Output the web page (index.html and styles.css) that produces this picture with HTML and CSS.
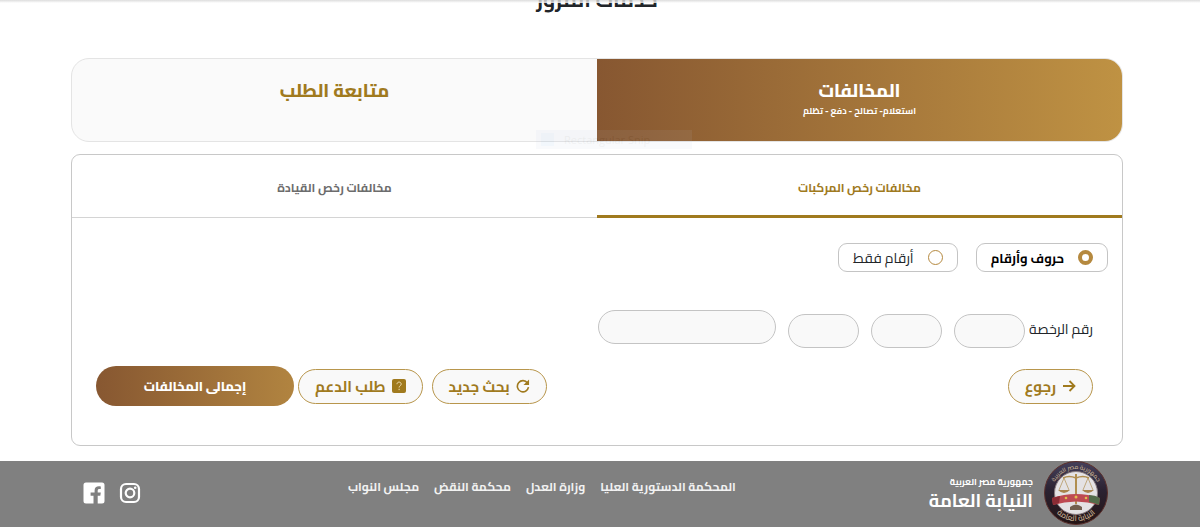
FILE: index.html
```html
<!DOCTYPE html>
<html lang="ar" dir="rtl">
<head>
    <meta charset="UTF-8">
    <meta name="viewport" content="width=device-width, initial-scale=1.0">
    <title>خدمات المرور</title>
    <link rel="stylesheet" href="styles.css">
</head>
<body>
    <div class="top-shadow"></div>

    <main class="page">
        <h1 class="page-title">خدمات المرور</h1>

        <nav class="services">
            <a href="#violations" class="service active">
                <span class="service-name">المخالفات</span>
                <span class="service-note">استعلام- تصالح - دفع - تظلم</span>
            </a>
            <a href="#follow" class="service">
                <span class="service-name">متابعة الطلب</span>
            </a>
            <div class="snip-hint" dir="ltr"><span class="snip-icon"></span>Rectangular Snip</div>
        </nav>

        <section class="panel" id="violations">
            <div class="tabs">
                <button type="button" class="tab active">مخالفات رخص المركبات</button>
                <button type="button" class="tab">مخالفات رخص القيادة</button>
            </div>

            <form class="search">
                <div class="plate-types">
                    <label class="plate-type"><input type="radio" name="plate" checked><span>حروف وأرقام</span></label>
                    <label class="plate-type"><input type="radio" name="plate"><span>أرقام فقط</span></label>
                </div>

                <div class="plate-row">
                    <label class="plate-label" for="letter1">رقم الرخصة</label>
                    <div class="plate-fields">
                        <input type="text" class="field" id="letter1" maxlength="1">
                        <input type="text" class="field" id="letter2" aria-label="الحرف الثاني" maxlength="1">
                        <input type="text" class="field" id="letter3" aria-label="الحرف الثالث" maxlength="1">
                        <input type="text" class="field field-wide" id="numbers" aria-label="الأرقام">
                    </div>
                </div>

                <div class="actions">
                    <button type="button" class="btn btn-back">
                        <svg width="14" height="14" viewBox="0 0 14 14"><path d="M1 7h11M7.500 2l5 5-5 5" fill="none" stroke="currentColor" stroke-width="1.800"/></svg>
                        رجوع
                    </button>
                    <button type="reset" class="btn">
                        <svg width="14" height="14" viewBox="0 0 15 15"><path d="M12.300 4.200A6 6 0 1 0 13.400 8.800" fill="none" stroke="currentColor" stroke-width="1.700"/><path d="M14 .5v6H8z" fill="currentColor"/></svg>
                        بحث جديد
                    </button>
                    <div class="action-group">
                        <button type="button" class="btn">
                            <svg width="14" height="14" viewBox="0 0 14 14"><rect width="14" height="14" rx="2" fill="currentColor"/><path d="M5 5.200c0-2.800 4.200-2.800 4.200 0C9.200 6.700 7.100 6.700 7.100 8.500M7.100 9.800v1.300" fill="none" stroke="#f0dfb4" stroke-width="1"/></svg>
                            طلب الدعم
                        </button>
                        <button type="submit" class="btn-total">إجمالى المخالفات</button>
                    </div>
                </div>
            </form>
        </section>
    </main>

    <footer class="footer">
        <div class="brand">
            <svg class="seal" width="64" height="64" viewBox="0 0 64 64">
                <defs>
                    <path id="arc-top" d="M8 32a24 24 0 0 1 48 0"/>
                    <path id="arc-bottom" d="M4 32a28 28 0 0 0 56 0"/>
                    <linearGradient id="ring" x1="0" y1="0" x2="0" y2="1">
                        <stop offset="0" stop-color="#45405a"/>
                        <stop offset=".45" stop-color="#2b2232"/>
                        <stop offset="1" stop-color="#241414"/>
                    </linearGradient>
                </defs>
                <circle cx="32" cy="32" r="31.500" fill="url(#ring)" stroke="#5c302c"/>
                <circle cx="32" cy="32" r="21.500" fill="#e4e2e4" stroke="#8a7c80"/>
                <g stroke="#b08e50" fill="none">
                    <path d="M32 13v30" stroke-width="2"/>
                    <path d="M19 17q6-3 13 0 7-3 13 0" stroke-width="1.500"/>
                    <path d="M20 17l-5 12M20 17l5 12M44 17l-5 12M44 17l5 12" stroke-width=".7"/>
                </g>
                <path d="M14 29h12q-6 6-12 0zM38 29h12q-6 6-12 0z" fill="#a8834d"/>
                <path d="M26 46q6-5 12 0v3H26z" fill="#725f4f"/>
                <path d="M8 37q24-8 48 0l-1 7q-23-7-46 0z" fill="#bd4a52"/>
                <path d="M45 34q6 0 11 3l-1 7q-4-2-10-3z" fill="#536c4a"/>
                <path d="M8 37l8-2-1 7-6 2z" fill="#8b2c35"/>
                <g fill="#e3bd4e"><circle cx="22" cy="37" r="1.300"/><circle cx="32" cy="36" r="1.500"/><circle cx="42" cy="37" r="1.300"/></g>
                <text class="seal-text"><textPath href="#arc-top" startOffset="50%">جمهورية مصر العربية</textPath></text>
                <text class="seal-text seal-text-large"><textPath href="#arc-bottom" startOffset="50%">النيابة العامة</textPath></text>
            </svg>
            <div class="brand-text">
                <span class="brand-country">جمهورية مصر العربية</span>
                <strong class="brand-name">النيابة العامة</strong>
            </div>
        </div>

        <nav class="links">
            <a href="#">المحكمة الدستورية العليا</a>
            <a href="#">وزارة العدل</a>
            <a href="#">محكمة النقض</a>
            <a href="#">مجلس النواب</a>
        </nav>

        <div class="social">
            <a href="#" aria-label="Instagram">
                <svg width="22" height="22" viewBox="0 0 22 22"><rect x="2" y="2" width="18" height="18" rx="5" fill="none" stroke="currentColor" stroke-width="2.200"/><circle cx="11" cy="11" r="4.300" fill="none" stroke="currentColor" stroke-width="2.200"/><circle cx="16.200" cy="5.800" r="1.300" fill="currentColor"/></svg>
            </a>
            <a href="#" aria-label="Facebook">
                <svg width="22" height="22" viewBox="0 0 22 22"><path d="M3 .5h16A2.500 2.500 0 0 1 21.500 3v16a2.500 2.500 0 0 1-2.500 2.500h-4.300v-7.700h2.600l.5-3.200h-3.100V8.800c0-1 .5-1.700 1.800-1.700h1.300V4.400c-3.600-.7-6.200.4-6.200 4v2.200H7.600v3.200h2.900v7.700H3A2.500 2.500 0 0 1 .5 19V3A2.500 2.500 0 0 1 3 .5z" fill="currentColor"/></svg>
            </a>
        </div>
    </footer>
</body>
</html>
```

FILE: styles.css
```css
* {
    box-sizing: border-box;
}

body {
    margin: 0;
    background-color: #fff;
    color: #212529;
    font-family: "Cairo", "DejaVu Sans", sans-serif;
    font-size: 14px;
    overflow: hidden;
}

a {
    color: inherit;
    text-decoration: none;
}

button,
input {
    font-family: inherit;
}

svg {
    display: block;
    flex: none;
}

.top-shadow {
    position: fixed;
    top: 0;
    left: 0;
    right: 0;
    height: 3px;
    background: linear-gradient(#d4d4d4, #fff);
    opacity: 0.8;
}

.page {
    padding: 0 77px 0 71px;
}

/* the page is scrolled past most of the title */
.page-title {
    margin: -16px 0 42px;
    font-size: 21px;
    line-height: 32px;
    text-align: center;
}

.services {
    position: relative;
    display: grid;
    grid-template-columns: 1fr 1fr;
    height: 84px;
    border: 1px solid #e4e4e4;
    border-radius: 18px;
    background-color: #fafafa;
}

.service {
    display: flex;
    flex-direction: column;
    align-items: center;
    padding-top: 18px;
    color: #a07a1e;
    font-weight: bold;
}

.service.active {
    color: #fff;
    background: linear-gradient(to right, #875731, #bf9243);
    border-radius: 0 17px 17px 0;
}

.service-name {
    font-size: 18px;
    font-weight: 800;
    line-height: 28px;
}

.service-note {
    font-size: 9px;
    line-height: 12px;
}

/* faint tooltip over the tabs */
.snip-hint {
    position: absolute;
    left: 464px;
    bottom: -8px;
    display: flex;
    align-items: center;
    gap: 10px;
    width: 156px;
    height: 19px;
    padding-left: 5px;
    background-color: #b9c8e4;
    color: #456;
    font-family: "Open Sans", sans-serif;
    font-size: 11px;
    opacity: 0.08;
}

.snip-icon {
    width: 13px;
    height: 13px;
    background-color: #6aa4e0;
}

.panel {
    margin-top: 12px;
    border: 1px solid #c8c8c8;
    border-radius: 9px;
}

.tabs {
    display: grid;
    grid-template-columns: 1fr 1fr;
    height: 63px;
}

.tab {
    padding: 2px 0 0;
    border: 0;
    border-bottom: 1px solid #d4d4d4;
    background: none;
    color: #6c6c6c;
    font-size: 12px;
    font-weight: bold;
}

.tab.active {
    padding-top: 4px;
    border-bottom: 3px solid #a07a1e;
    color: #a07a1e;
}

.search {
    padding: 25px 14px 39px 24px;
}

.plate-types {
    display: flex;
    gap: 18px;
}

.plate-type {
    display: flex;
    align-items: center;
    gap: 14px;
    height: 29px;
    padding: 0 14px;
    border: 1px solid #c4c4c4;
    border-radius: 9px;
}

.plate-type:has(:checked) {
    color: #000;
    font-size: 13px;
    font-weight: bold;
}

.plate-type input {
    appearance: none;
    width: 15px;
    height: 15px;
    margin: 0;
    border: 1px solid #b5893f;
    border-radius: 50%;
}

.plate-type input:checked {
    border-width: 4px;
}

.plate-row {
    display: flex;
    align-items: center;
    gap: 4px;
    margin: 38px 15px 18px 0;
}

.plate-fields {
    display: flex;
    align-items: flex-end;
    gap: 12px;
    height: 38px;
}

.field {
    width: 71px;
    height: 34px;
    padding: 0 16px;
    border: 1px solid #c4c4c4;
    border-radius: 17px;
    background-color: #f9f9f9;
}

.field-wide {
    align-self: flex-start;
    width: 178px;
}

.actions,
.action-group {
    display: flex;
    align-items: center;
}

.actions {
    gap: 9px;
    padding-right: 15px;
}

.action-group {
    gap: 4px;
}

.btn {
    display: flex;
    align-items: center;
    gap: 6px;
    height: 35px;
    padding: 0 16px;
    border: 1px solid #b8964c;
    border-radius: 18px;
    background-color: #f9f9f9;
    color: #a07a1e;
    font-size: 15px;
    font-weight: bold;
}

.btn-back {
    margin-left: auto;
}

.btn-total {
    width: 198px;
    height: 40px;
    border: 0;
    border-radius: 20px;
    background: linear-gradient(to right, #875731, #b18440);
    color: #fff;
    font-size: 13px;
    font-weight: 800;
}

.footer {
    display: flex;
    align-items: center;
    height: 66px;
    margin-top: 15px;
    padding: 0 92px 2px 83px;
    background-color: #808080;
    color: #fff;
}

.brand {
    display: flex;
    align-items: center;
    gap: 11px;
    flex: 1;
}

.brand-text {
    display: flex;
    flex-direction: column;
}

.brand-country {
    font-size: 9px;
    font-weight: bold;
    line-height: 16px;
}

.brand-name {
    font-size: 18px;
    line-height: 22px;
}

.seal-text {
    fill: #c9b294;
    font-size: 6px;
    font-weight: 600;
    text-anchor: middle;
}

.seal-text-large {
    font-size: 8px;
}

.links {
    display: flex;
    gap: 15px;
    padding-bottom: 14px;
    color: #f2f2f2;
    font-size: 12px;
    font-weight: bold;
}

.social {
    display: flex;
    justify-content: flex-end;
    gap: 14px;
    flex: 0 1 265px;
}
```
